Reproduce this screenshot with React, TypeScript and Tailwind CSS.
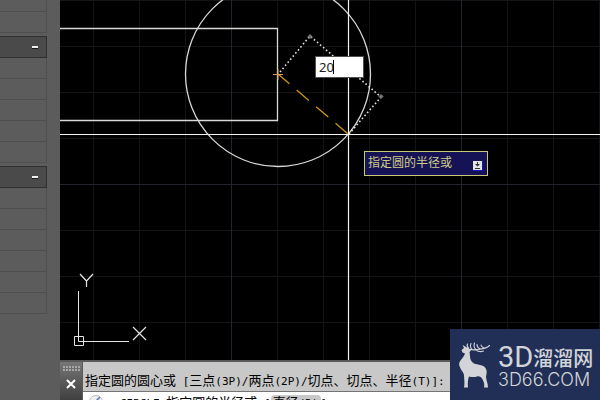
import React from 'react';

interface PanelGroupProps {
  name: string;
  rows: number;
}

const MONO_SPLIT = /([\x20-\x7e]+)/;

const PanelGroup: React.FC<PanelGroupProps> = ({ name, rows }) => (
  <section className="mt-[3px]">
    <button
      aria-label={`Collapse ${name}`}
      className="flex h-[22px] w-full items-center justify-end border-y border-r border-[#303030] bg-[#4a4a4a] pr-2"
    >
      <span className="h-[3px] w-1.5 border-b border-[#1c1c1c] bg-[#f0f0f0]" />
    </button>
    {Array.from({ length: rows }, (_, i) => (
      <div key={i} className="h-[21px] border-r border-b border-[#4f4f4f]" />
    ))}
  </section>
);

// Latin runs are half the width of the Chinese glyphs around them
const ConsoleText: React.FC<{ text: string }> = ({ text }) => (
  <>
    {text.split(MONO_SPLIT).map((part, i) =>
      i % 2 === 1 ? (
        <span key={i} className="font-['DejaVu_Sans_Mono',monospace] text-[11px]">{part}</span>
      ) : (
        part
      )
    )}
  </>
);

const Drawing = () => (
  <svg className="absolute inset-0 h-full w-full" fill="none" aria-hidden="true">
    <defs>
      <pattern id="minor" x="33" y="0" width="46" height="46" patternUnits="userSpaceOnUse">
        <path d="M0.5 0V46M0 0.5H46" stroke="#131318" />
      </pattern>
      <pattern id="major" x="171" y="184" width="230" height="230" patternUnits="userSpaceOnUse">
        <path d="M0.5 0V230M0 0.5H230" stroke="#23232e" />
      </pattern>
    </defs>
    <rect width="100%" height="100%" fill="url(#minor)" />
    <rect width="100%" height="100%" fill="url(#major)" />

    {/* Part outline and the circle being drawn */}
    <path d="M0 28.5H217.5V120.5H0" stroke="#d8d8d8" strokeWidth="1.3" />
    <circle cx="218" cy="74" r="92.5" stroke="#d8d8d8" strokeWidth="1.3" />

    {/* Crosshair */}
    <path d="M0 134.5H2000M288.5 0V2000" stroke="#f4f4f0" strokeWidth="1.2" />

    {/* Dimension guides */}
    <path d="M220 72L250 36L321 97L289 134" stroke="#e0e0e0" strokeWidth="1.6" strokeDasharray="1.6 2.4" />
    <path d="M250 34.5l2 2-2 2-2-2zM321 94.5l2 2-2 2-2-2z" fill="#777" stroke="#777" />
    <path d="M218 74L288 134" stroke="#c8921c" strokeWidth="1.4" strokeDasharray="16 9.6" strokeDashoffset="1" />
    <path d="M213 74.5H223M218 69V80" stroke="#dc9a50" />

    {/* UCS icon */}
    <g stroke="#e4e4e4">
      <path d="M18.5 291V341.5H69M14.5 336.5H23.5V345.5H14.5Z" />
      <path d="M20 274L26.5 281L33 274M26.5 281V287M73 327L86 340M86 327L73 340" strokeWidth="1.2" />
    </g>
  </svg>
);

const Deer = () => (
  <svg className="h-[50px] w-9 shrink-0" viewBox="0 0 36 50" fill="none" aria-hidden="true">
    <path
      d="M3.5 10L6 8L4.5 5L8 7L10.5 8.5L13 10.5L11.5 12L12 16C12 19 13 22 16 23.5C20 25 25 24.5 27.5 28C29 30 29 33 28 36.5C28 40 30 43 30 47.5H26C27 44 25.5 41 24 38.5C22.5 36.5 21 36 19 36.5C16 37.5 13 37 11 36.5C10 39.5 9.5 43 10 47.5H6C7 43 6 39 6 35C5.5 32 2 29 1.2 25C0.5 21 5 19 7 13.5L4.5 12.5Z"
      fill="#d2d4d8"
    />
    <path
      d="M9 8.5C13 10.5 17 10 20 9.5C25 9 29 8 31.5 5.5M11 9C9 7 8.5 6 9.5 4M14 9.5C12 7.5 12 6 13 3.5M18 9.5C15.5 7.5 15.5 6 16.5 3M22 9C19.5 7.5 19 6 19 4.5M26 8C24 7 23 6 23 5M18 10C20.5 12 23 12 25.5 11"
      stroke="#d2d4d8"
      strokeWidth="1.1"
      strokeLinecap="round"
    />
  </svg>
);

const Watermark = () => (
  <div className="absolute right-0 bottom-0 flex h-[71px] w-[150px] items-center gap-1 bg-[#212f56] pl-2 text-[#d2d4d8]">
    <Deer />
    <div className="flex flex-col pt-1 whitespace-nowrap">
      <div className="flex h-[27px] items-center">
        <span className="font-['Roboto',sans-serif] text-[29px] leading-[27px]">3D</span>
        <span className="font-['Noto_Sans_CJK_SC',sans-serif] text-[20px] leading-[27px] font-medium">溜溜网</span>
      </div>
      <div className="font-['Inter',sans-serif] text-[18px] leading-[18px] font-light">3D66.COM</div>
    </div>
  </div>
);

const CommandLine = () => (
  <div className="flex h-10 shrink-0 overflow-hidden border-t-2 border-[#585858] font-['Noto_Sans_CJK_SC',sans-serif] text-[13px] text-black">
    <div className="flex w-[23px] shrink-0 flex-col items-center border-r border-[#5a5a5a] bg-linear-to-b from-[#777] to-[#404040] pt-1">
      <div className="grid grid-cols-6 gap-px">
        {Array.from({ length: 12 }, (_, i) => (
          <span key={i} className="size-[2px] bg-[#a8a8a8]" />
        ))}
      </div>
      <button aria-label="Close command line" className="mt-2 text-white">
        <svg className="size-2.5" viewBox="0 0 10 10" fill="none" stroke="currentColor" strokeWidth="2">
          <path d="M1 1L9 9M9 1L1 9" />
        </svg>
      </button>
    </div>
    <div className="min-w-0 flex-1 whitespace-pre">
      <div className="h-[30px] border-b border-[#747474] bg-[#c8c8c8] pt-2 pl-0.5 leading-[20px]">
        <ConsoleText text="指定圆的圆心或 [三点(3P)/两点(2P)/切点、切点、半径(T)]:" />
      </div>
      <div className="flex h-6 bg-white pl-1.5 leading-[20px]">
        <svg className="mt-[3px] mr-[17px] size-3.5 shrink-0" viewBox="0 0 14 14" fill="none">
          <circle cx="7" cy="7" r="6.5" fill="#f0f0f0" stroke="#bcbcbc" />
          <path d="M5 8L11 2" stroke="#5878b0" strokeWidth="1.5" />
        </svg>
        <span>
          <ConsoleText text="CIRCLE 指定圆的半径或 [" />
        </span>
        <button className="mt-[3px] h-3.5 rounded-t bg-[#c8c8c8] px-0.5 leading-[14px]">
          <ConsoleText text="直径(D)" />
        </button>
        <span>
          <ConsoleText text="]" />
        </span>
      </div>
    </div>
  </div>
);

const App: React.FC = () => {
  return (
    <div className="relative flex h-screen overflow-hidden bg-black">
      <aside className="w-15 shrink-0 bg-[#5c5c5c] pr-[13px]">
        <div className="h-3 border-r border-b border-[#4f4f4f]" />
        <div className="h-[21px] border-r border-b border-[#4f4f4f]" />
        <PanelGroup name="general" rows={5} />
        <PanelGroup name="geometry" rows={6} />
      </aside>

      <main className="flex min-w-0 flex-1 flex-col">
        <div className="relative flex-1 overflow-hidden">
          <Drawing />
          <div className="absolute top-14 left-[255px] h-[22px] w-[49px]">
            <input
              aria-label="Radius"
              defaultValue="20"
              className="block h-full w-full border border-[#505050] bg-white pl-[3px] font-['Noto_Sans',sans-serif] text-[13px] text-[#202020] outline-none"
            />
            <span className="absolute top-1 left-[18px] h-3.5 w-px bg-black" />
          </div>
          <div className="absolute top-[151px] left-[304px] flex h-[25px] w-[124px] items-center justify-between border border-[#c8c878] bg-[#161256] pr-1 pl-[3px]">
            <span className="pb-1 font-['Noto_Sans_CJK_SC',sans-serif] text-[12px] leading-[16px] whitespace-nowrap text-[#cdcd84]">
              指定圆的半径或
            </span>
            <svg className="mt-1 size-2.5" viewBox="0 0 10 10" aria-hidden="true">
              <path d="M0 0H10V10H0Z" fill="#1616c8" />
              <path d="M0 0H9V9H0Z" fill="#e4e4e4" />
              <path d="M4 1H5V3H7L4.5 5.5L2 3H4ZM2 7H7V8H2Z" fill="#333" />
            </svg>
          </div>
        </div>
        <CommandLine />
      </main>

      <Watermark />
    </div>
  );
};

export default App;
